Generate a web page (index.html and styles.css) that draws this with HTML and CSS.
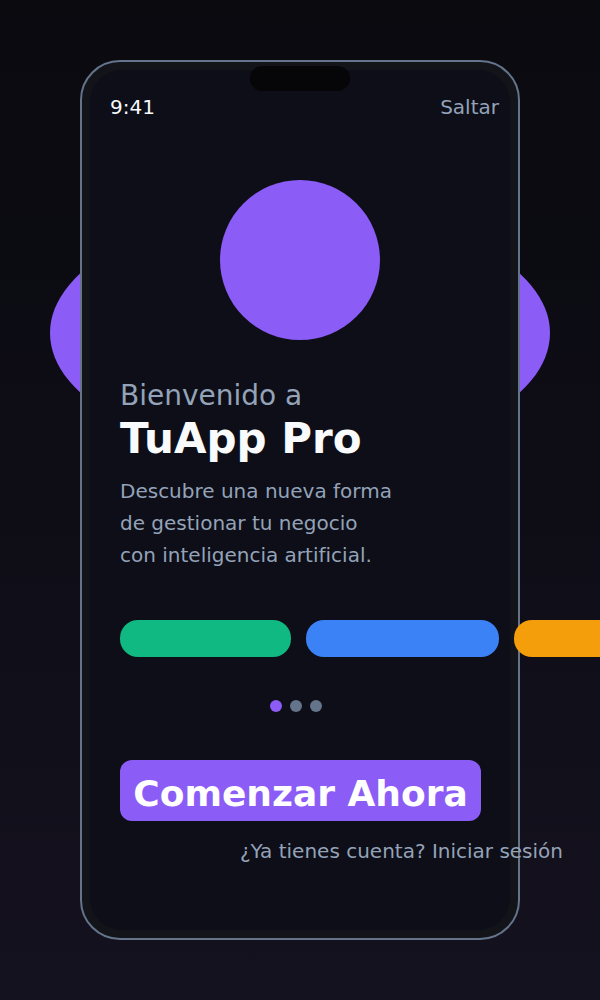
FILE: index.html
```html
<!DOCTYPE html>
<html lang="es">
<head>
<meta charset="utf-8">
<title>TuApp Pro</title>
<link rel="stylesheet" href="styles.css">
</head>
<body>
<div class="stage">
  <div class="glow"></div>
  <div class="phone">
    <div class="notch"></div>
    <div class="screen">
      <div class="status">
        <span class="time">9:41</span>
        <span class="skip">Saltar</span>
      </div>
      <div class="hero"></div>
      <div class="content">
        <p class="welcome">Bienvenido a</p>
        <h1 class="title">TuApp Pro</h1>
        <p class="desc">Descubre una nueva forma de gestionar tu negocio con inteligencia artificial.</p>
        <div class="pills">
          <span class="pill pill-green"></span>
          <span class="pill pill-blue"></span>
          <span class="pill pill-orange"></span>
        </div>
        <div class="dots">
          <span class="dot dot-active"></span>
          <span class="dot"></span>
          <span class="dot"></span>
        </div>
        <button class="cta">Comenzar Ahora</button>
        <p class="login">¿Ya tienes cuenta? Iniciar sesión</p>
      </div>
    </div>
  </div>
</div>
</body>
</html>
```
FILE: styles.css
```css
html, body {
  margin: 0;
  padding: 0;
}
body {
  width: 600px;
  height: 1000px;
  overflow: hidden;
  background: linear-gradient(180deg, #0a0a0f 0%, #0e0d16 50%, #15121f 100%);
  font-family: "DejaVu Sans", sans-serif;
}
.stage {
  position: relative;
  padding-top: 60px;
  height: 940px;
}
.glow {
  position: absolute;
  left: 50px;
  top: 208px;
  width: 500px;
  height: 250px;
  border-radius: 50%;
  background: #8b5cf6;
}
.phone {
  position: relative;
  box-sizing: border-box;
  width: 440px;
  height: 880px;
  margin: 0 auto;
  border: 2px solid #64748b;
  border-radius: 40px;
  background: #121419;
  padding: 8px;
}
.notch {
  position: absolute;
  top: 4px;
  left: 50%;
  margin-left: -50px;
  width: 100px;
  height: 25px;
  border-radius: 13px;
  background: #060609;
  z-index: 2;
}
.screen {
  height: 100%;
  border-radius: 32px;
  background: #0d0e18;
}
.status {
  display: flex;
  justify-content: space-between;
  padding: 25px 11px 0 20px;
  font-size: 20px;
  line-height: 24px;
}
.time {
  color: #f8fafc;
}
.skip {
  color: #94a3b8;
}
.hero {
  width: 160px;
  height: 160px;
  margin: 61px auto 0;
  border-radius: 50%;
  background: #8b5cf6;
}
.content {
  padding: 0 30px;
}
.welcome {
  margin: 40px 0 0;
  font-size: 28px;
  line-height: 32px;
  color: #94a3b8;
}
.title {
  margin: 2px 0 0;
  font-size: 42px;
  line-height: 50px;
  font-weight: bold;
  color: #f8fafc;
}
.desc {
  margin: 11px 0 0;
  max-width: 275px;
  font-size: 20px;
  line-height: 32px;
  color: #94a3b8;
}
.pills {
  display: flex;
  gap: 15px;
  margin-top: 49px;
  white-space: nowrap;
}
.pill {
  flex: none;
  height: 37px;
  border-radius: 18px;
}
.pill-green {
  width: 171px;
  background: #10b981;
}
.pill-blue {
  width: 193px;
  background: #3b82f6;
}
.pill-orange {
  width: 180px;
  background: #f59e0b;
}
.dots {
  display: flex;
  gap: 8px;
  margin: 43px 0 0 150px;
}
.dot {
  width: 12px;
  height: 12px;
  border-radius: 50%;
  background: #64748b;
}
.dot-active {
  background: #8b5cf6;
}
.cta {
  display: block;
  box-sizing: border-box;
  width: 361px;
  height: 61px;
  margin-top: 48px;
  padding: 15px 0 9px;
  border: none;
  border-radius: 12px;
  background: #8b5cf6;
  color: #ffffff;
  font-family: "DejaVu Sans", sans-serif;
  font-size: 36px;
  line-height: 37px;
  font-weight: bold;
  text-align: center;
  white-space: nowrap;
}
.login {
  margin: 18px 0 0 120px;
  font-size: 20px;
  line-height: 24px;
  color: #94a3b8;
  white-space: nowrap;
}
```
